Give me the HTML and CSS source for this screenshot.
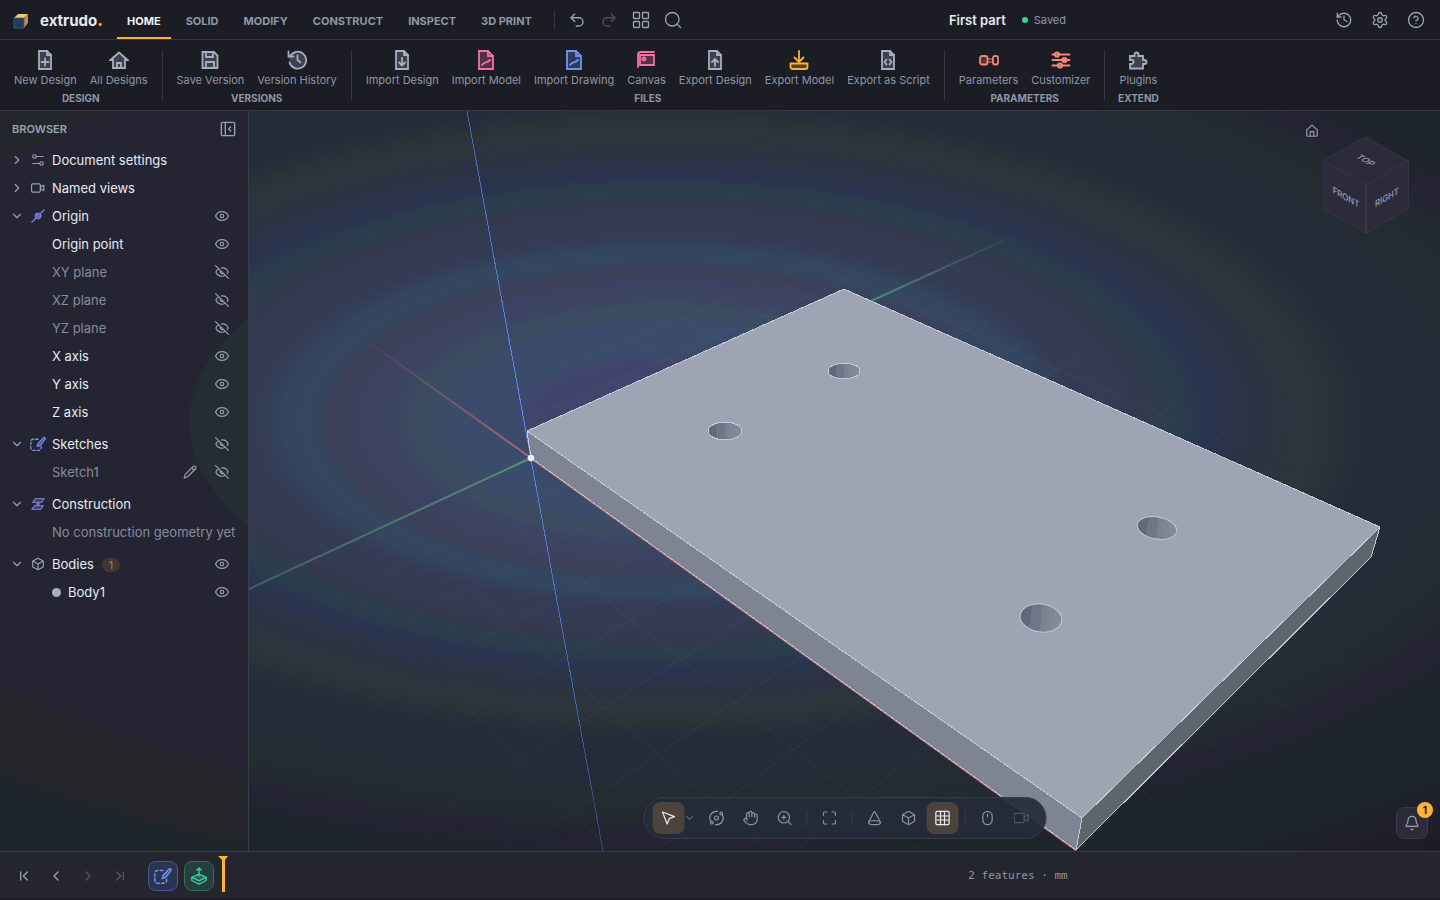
FILE: index.html
```html
<!DOCTYPE html>
<html lang="en">
<head>
<meta charset="utf-8">
<title>extrudo – First part</title>
<link rel="stylesheet" href="styles.css">
</head>
<body>
<svg class="sprite" aria-hidden="true">
  <symbol id="undo" viewBox="0 0 24 24"><path d="M9 14 4 9l5-5"/><path d="M4 9h10.500a5.500 5.500 0 0 1 0 11H11"/></symbol>
  <symbol id="redo" viewBox="0 0 24 24"><path d="m15 14 5-5-5-5"/><path d="M20 9H9.500a5.500 5.500 0 0 0 0 11H13"/></symbol>
  <symbol id="apps" viewBox="0 0 24 24"><rect x="2" y="2" width="8" height="8" rx="1"/><rect x="14" y="2" width="8" height="8" rx="1"/><rect x="14" y="14" width="8" height="8" rx="1"/><rect x="2" y="14" width="8" height="8" rx="1"/></symbol>
  <symbol id="search" viewBox="0 0 24 24"><circle cx="11" cy="11" r="9"/><path d="m22 22-4.500-4.500"/></symbol>
  <symbol id="history" viewBox="0 0 24 24"><path d="M3 12a9 9 0 1 0 9-9 9.750 9.750 0 0 0-6.740 2.740L3 8"/><path d="M3 3v5h5M12 7v5l4 2"/></symbol>
  <symbol id="gear" viewBox="0 0 24 24"><path d="M9.671 4.136a2.340 2.340 0 0 1 4.659 0 2.340 2.340 0 0 0 3.319 1.915 2.340 2.340 0 0 1 2.330 4.033 2.340 2.340 0 0 0 0 3.831 2.340 2.340 0 0 1-2.330 4.033 2.340 2.340 0 0 0-3.319 1.915 2.340 2.340 0 0 1-4.659 0 2.340 2.340 0 0 0-3.320-1.915 2.340 2.340 0 0 1-2.330-4.033 2.340 2.340 0 0 0 0-3.831A2.340 2.340 0 0 1 6.350 6.051a2.340 2.340 0 0 0 3.319-1.915"/><circle cx="12" cy="12" r="3"/></symbol>
  <symbol id="help" viewBox="0 0 24 24"><circle cx="12" cy="12" r="10"/><path d="M9.100 9a3 3 0 0 1 5.800 1c0 2-3 3-3 3M12 17h.01"/></symbol>
  <symbol id="file-plus" viewBox="0 0 20 20"><path class="tone" d="M4 1h8l4 4v14H4z"/><path d="M12 1v4h4M10 8.500v7M6.500 12h7"/></symbol>
  <symbol id="house" viewBox="0 0 20 20"><path class="tone" d="M1.500 10 10 2.500 18.500 10H16v8H4v-8z"/><path d="M8 18v-5h4v5"/></symbol>
  <symbol id="save" viewBox="0 0 20 20"><path class="tone" d="M2.500 2H14l3.500 3.500V18h-15z"/><path d="M6 2v5h7V2M6 18v-6h8v6"/></symbol>
  <symbol id="clock" viewBox="0 0 20 20"><circle class="tone" cx="10.500" cy="10" r="8.500" stroke="none"/><path d="M3 6.500a8.500 8.500 0 1 1-.5 6"/><path d="M1.500 1.500v5h5M10.500 5.500V10l3 2.500"/></symbol>
  <symbol id="file-down" viewBox="0 0 20 20"><path class="tone" d="M4 1h8l4 4v14H4z"/><path d="M12 1v4h4M10 8v7.500M7 12.500l3 3 3-3"/></symbol>
  <symbol id="file-up" viewBox="0 0 20 20"><path class="tone" d="M4 1h8l4 4v14H4z"/><path d="M12 1v4h4M10 16V9M7 12l3-3 3 3"/></symbol>
  <symbol id="file-curve" viewBox="0 0 20 20"><path class="tone" d="M3 1h9l5 5v13H3z"/><path d="M12 1v5h5M6 15c3-4 4-1 8-5"/></symbol>
  <symbol id="canvas" viewBox="0 0 20 20"><path class="tone" d="M4 5h14v10H4z"/><path d="M2 17V4.500A3 3 0 0 1 5 2h13"/><circle cx="8" cy="9" r="1.500"/></symbol>
  <symbol id="tray-down" viewBox="0 0 20 20"><path d="M10 1v10M5.500 7.500 10 12l4.500-4.500"/><path class="tone" d="M1.500 13.500h17V17a2 2 0 0 1-2 2h-13a2 2 0 0 1-2-2z"/></symbol>
  <symbol id="file-code" viewBox="0 0 20 20"><path class="tone" d="M4 1h8l4 4v14H4z"/><path d="M12 1v4h4M8.500 9.500 6.500 12l2 2.500M11.500 9.500l2 2.500-2 2.500"/></symbol>
  <symbol id="params" viewBox="0 0 20 20"><rect class="tone" x="1" y="6" width="7.500" height="8.500" rx="2"/><rect x="14" y="6" width="5" height="8.500" rx="2"/><path d="M8.500 9H14M8.500 12H14" stroke-width="1.200"/></symbol>
  <symbol id="sliders" viewBox="0 0 20 20"><path d="M1.500 4.500h17M1.500 10h17M1.500 15.500h17"/><g class="tone"><circle cx="6" cy="4.500" r="2.200"/><circle cx="13.500" cy="10" r="2.200"/><circle cx="9" cy="15.500" r="2.200"/></g></symbol>
  <symbol id="puzzle" viewBox="0 0 20 20"><path class="tone" d="M2 6h4.500V4.500a2 2 0 0 1 4 0V6H15v4h1.500a2 2 0 0 1 0 4H15v4.500H2V14h1.500a2 2 0 0 0 0-4H2z"/></symbol>
  <symbol id="panel" viewBox="0 0 24 24"><rect x="2" y="2" width="20" height="20" rx="2"/><path d="M8 2v20M16 9l-3 3 3 3"/></symbol>
  <symbol id="right" viewBox="0 0 24 24"><path d="m9 18 6-6-6-6"/></symbol>
  <symbol id="left" viewBox="0 0 24 24"><path d="m15 18-6-6 6-6"/></symbol>
  <symbol id="down" viewBox="0 0 24 24"><path d="m6 9 6 6 6-6"/></symbol>
  <symbol id="first" viewBox="0 0 24 24"><path d="m17 18-6-6 6-6M7 6v12"/></symbol>
  <symbol id="last" viewBox="0 0 24 24"><path d="m7 18 6-6-6-6M17 6v12"/></symbol>
  <symbol id="settings2" viewBox="0 0 24 24"><path d="M21 6H9M15 18H3"/><circle cx="18" cy="18" r="3"/><circle cx="6" cy="6" r="3"/></symbol>
  <symbol id="video" viewBox="0 0 24 24"><path d="m16 13 5.223 3.482a.5.5 0 0 0 .777-.416V7.870a.5.5 0 0 0-.752-.432L16 10.500"/><rect x="1" y="5" width="15" height="14" rx="2"/></symbol>
  <symbol id="origin" viewBox="0 0 16 16"><path d="M1 15 15 1" stroke-width="1.500" stroke-dasharray="2 1"/><circle cx="8" cy="8" r="3.500" fill="#5f62c4" stroke-width="1"/><path d="M6.500 6.500l3 3" stroke-width="1"/></symbol>
  <symbol id="sketch" viewBox="0 0 20 20"><path d="M10 4H4a3 3 0 0 0-3 3v8a3 3 0 0 0 3 3h7a3 3 0 0 0 3-3v-2" stroke-dasharray="3 2.500" stroke-width="1.700"/><path d="m9 13 1-3.500L17 2a1.500 1.500 0 0 1 2 2l-6.500 8z" fill="currentColor" fill-opacity=".4" stroke-width="1.500"/></symbol>
  <symbol id="planes" viewBox="0 0 16 16"><path d="M5 2h10l-3 4H2zM4 10h10l-3 4H1z" fill="currentColor" fill-opacity=".2" stroke-width="1.300"/><path d="M8 6v4M6 8h4" stroke-width="1.200"/></symbol>
  <symbol id="cube" viewBox="0 0 24 24"><path d="M12 2 21 7v10l-9 5-9-5V7zM3.300 7 12 12l8.700-5M12 22V12"/></symbol>
  <symbol id="eye" viewBox="0 0 24 24"><path d="M1 12C3 7 7 4.500 12 4.500s9 2.500 11 7.500c-2 5-6 7.500-11 7.500S3 17 1 12z"/><circle cx="12" cy="12" r="3"/></symbol>
  <symbol id="eye-off" viewBox="0 0 24 24"><path d="M10.700 5.100A10.700 10.700 0 0 1 22.500 12a10.700 10.700 0 0 1-1.500 2.500M14 14.200a3 3 0 0 1-4.200-4.200M17.500 17.500A10.700 10.700 0 0 1 1.500 12a10.700 10.700 0 0 1 5-5.100M1 1l22 22"/></symbol>
  <symbol id="pencil" viewBox="0 0 24 24"><path d="M21.200 6.800a2.800 2.800 0 0 0-4-4L3.800 16.200 2 22l5.800-1.800zM15 5l4 4"/></symbol>
  <symbol id="cursor" viewBox="0 0 24 24"><path d="M3 3l7 18 3-8 8-3z"/></symbol>
  <symbol id="orbit" viewBox="0 0 24 24"><circle cx="12" cy="12" r="3"/><circle cx="19" cy="5" r="2"/><circle cx="5" cy="19" r="2"/><path d="M10.400 21.900a10 10 0 0 0 9.940-15.416M13.500 2.100a10 10 0 0 0-9.841 15.416"/></symbol>
  <symbol id="hand" viewBox="0 0 24 24"><path d="M18 11V6a2 2 0 0 0-4 0M14 10V4a2 2 0 0 0-4 0v2M10 10.500V6a2 2 0 0 0-4 0v8"/><path d="M18 8a2 2 0 1 1 4 0v6a8 8 0 0 1-8 8h-2c-2.800 0-4.500-.86-5.990-2.340l-3.600-3.600a2 2 0 0 1 2.830-2.820L7 15"/></symbol>
  <symbol id="zoom" viewBox="0 0 24 24"><circle cx="11" cy="11" r="8.500"/><path d="m22 22-5-5M11 8v6M8 11h6"/></symbol>
  <symbol id="fit" viewBox="0 0 24 24"><path d="M8 3H5a2 2 0 0 0-2 2v3M21 8V5a2 2 0 0 0-2-2h-3M3 16v3a2 2 0 0 0 2 2h3M16 21h3a2 2 0 0 0 2-2v-3"/></symbol>
  <symbol id="cone" viewBox="0 0 24 24"><path d="m20.900 18.500-8-15.500c-.3-1-1.500-1-1.800 0L3 18.500"/><ellipse cx="12" cy="19" rx="9" ry="3"/></symbol>
  <symbol id="grid" viewBox="0 0 24 24"><rect x="2" y="2" width="20" height="20" rx="2"/><path d="M2 9h20M2 15h20M9 2v20M15 2v20"/></symbol>
  <symbol id="mouse" viewBox="0 0 24 24"><rect x="5" y="2" width="14" height="20" rx="7"/><path d="M12 6v4"/></symbol>
  <symbol id="home" viewBox="0 0 24 24"><path d="M15 21v-8H9v8M3 10l9-8 9 8v9a2 2 0 0 1-2 2H5a2 2 0 0 1-2-2z"/></symbol>
  <symbol id="bell" viewBox="0 0 24 24"><path d="M10.300 21a2 2 0 0 0 3.400 0M3.300 15.300A1 1 0 0 0 4 17h16a1 1 0 0 0 .7-1.700C19.400 14 18 12.500 18 8A6 6 0 0 0 6 8c0 4.500-1.400 6-2.700 7.300z"/></symbol>
  <symbol id="extrude" viewBox="0 0 20 20"><path d="m2 11.500 8-3.500 8 3.500-8 4z" fill="currentColor" fill-opacity=".25"/><path d="M2 11.500V15l8 4 8-4v-3.500M10 10V1M7.500 3.500 10 1l2.500 2.500"/></symbol>
</svg>

<header class="topbar">
  <div class="brand">
    <svg class="logo" viewBox="0 0 16 16"><path fill="#ffc670" d="M1 5 5 1h10l-4 4z"/><path fill="#c98c35" d="m11 5 4-4v9l-4 5z"/><path fill="#243a5c" stroke="#35608f" stroke-width="1" stroke-dasharray="1 1" d="M1 5h10v10H1z"/></svg>
    <span>extrudo<b>.</b></span>
  </div>
  <nav class="tabs">
    <button class="tab active">HOME</button><button class="tab">SOLID</button><button class="tab">MODIFY</button><button class="tab">CONSTRUCT</button><button class="tab">INSPECT</button><button class="tab">3D PRINT</button>
  </nav>
  <div class="quick">
    <button aria-label="Undo"><svg><use href="#undo"/></svg></button>
    <button aria-label="Redo" disabled><svg><use href="#redo"/></svg></button>
    <button aria-label="Commands"><svg><use href="#apps"/></svg></button>
    <button aria-label="Search"><svg><use href="#search"/></svg></button>
  </div>
  <div class="doc"><h1>First part</h1><span class="saved">Saved</span></div>
  <div class="account">
    <button aria-label="History"><svg><use href="#history"/></svg></button>
    <button aria-label="Settings"><svg><use href="#gear"/></svg></button>
    <button aria-label="Help"><svg><use href="#help"/></svg></button>
  </div>
</header>

<div class="ribbon">
  <section class="group"><div class="tools">
    <button><svg><use href="#file-plus"/></svg>New Design</button>
    <button><svg><use href="#house"/></svg>All Designs</button></div><h2>DESIGN</h2></section>
  <section class="group"><div class="tools">
    <button><svg><use href="#save"/></svg>Save Version</button>
    <button><svg><use href="#clock"/></svg>Version History</button></div><h2>VERSIONS</h2></section>
  <section class="group"><div class="tools">
    <button><svg><use href="#file-down"/></svg>Import Design</button>
    <button><svg class="pink"><use href="#file-curve"/></svg>Import Model</button>
    <button><svg class="blue"><use href="#file-curve"/></svg>Import Drawing</button>
    <button><svg class="pink"><use href="#canvas"/></svg>Canvas</button>
    <button><svg><use href="#file-up"/></svg>Export Design</button>
    <button><svg class="amber"><use href="#tray-down"/></svg>Export Model</button>
    <button><svg><use href="#file-code"/></svg>Export as Script</button></div><h2>FILES</h2></section>
  <section class="group"><div class="tools">
    <button><svg class="coral"><use href="#params"/></svg>Parameters</button>
    <button><svg class="coral"><use href="#sliders"/></svg>Customizer</button></div><h2>PARAMETERS</h2></section>
  <section class="group"><div class="tools">
    <button><svg><use href="#puzzle"/></svg>Plugins</button></div><h2>EXTEND</h2></section>
</div>

<div class="workspace">
  <aside class="browser">
    <div class="browser-head"><h2>BROWSER</h2><button aria-label="Collapse browser"><svg><use href="#panel"/></svg></button></div>
    <ul class="tree">
      <li class="row"><svg><use href="#right"/></svg><svg class="kind"><use href="#settings2"/></svg><span>Document settings</span></li>
      <li class="row"><svg><use href="#right"/></svg><svg class="kind"><use href="#video"/></svg><span>Named views</span></li>
      <li class="row"><svg><use href="#down"/></svg><svg class="kind violet"><use href="#origin"/></svg><span>Origin</span><button aria-label="Hide Origin"><svg><use href="#eye"/></svg></button></li>
      <li class="row child"><span>Origin point</span><button aria-label="Hide Origin point"><svg><use href="#eye"/></svg></button></li>
      <li class="row child off"><span>XY plane</span><button aria-label="Show XY plane"><svg><use href="#eye-off"/></svg></button></li>
      <li class="row child off"><span>XZ plane</span><button aria-label="Show XZ plane"><svg><use href="#eye-off"/></svg></button></li>
      <li class="row child off"><span>YZ plane</span><button aria-label="Show YZ plane"><svg><use href="#eye-off"/></svg></button></li>
      <li class="row child"><span>X axis</span><button aria-label="Hide X axis"><svg><use href="#eye"/></svg></button></li>
      <li class="row child"><span>Y axis</span><button aria-label="Hide Y axis"><svg><use href="#eye"/></svg></button></li>
      <li class="row child"><span>Z axis</span><button aria-label="Hide Z axis"><svg><use href="#eye"/></svg></button></li>
      <li class="row section"><svg><use href="#down"/></svg><svg class="kind blue"><use href="#sketch"/></svg><span>Sketches</span><button aria-label="Show sketches"><svg><use href="#eye-off"/></svg></button></li>
      <li class="row child off"><span>Sketch1</span><button aria-label="Edit Sketch1"><svg><use href="#pencil"/></svg></button><button aria-label="Show Sketch1"><svg><use href="#eye-off"/></svg></button></li>
      <li class="row section"><svg><use href="#down"/></svg><svg class="kind violet"><use href="#planes"/></svg><span>Construction</span></li>
      <li class="row child off"><span>No construction geometry yet</span></li>
      <li class="row section"><svg><use href="#down"/></svg><svg class="kind"><use href="#cube"/></svg><span>Bodies<em class="count">1</em></span><button aria-label="Hide bodies"><svg><use href="#eye"/></svg></button></li>
      <li class="row child"><span class="body">Body1</span><button aria-label="Hide Body1"><svg><use href="#eye"/></svg></button></li>
    </ul>
  </aside>

  <main class="viewport">
    <svg class="scene" viewBox="249 111 1191 740" preserveAspectRatio="xMidYMid slice">
      <defs>
        <radialGradient id="fade" gradientUnits="userSpaceOnUse" cx="860" cy="600" r="560"><stop offset=".5" stop-color="#fff"/><stop offset="1" stop-color="#000"/></radialGradient>
        <mask id="grid-mask" maskUnits="userSpaceOnUse" x="249" y="111" width="1191" height="740"><path fill="url(#fade)" d="M249 111h1191v740H249z"/></mask>
        <linearGradient id="ax" gradientUnits="userSpaceOnUse" x1="360" y1="336" x2="531" y2="458"><stop stop-color="#a4636d" stop-opacity="0"/><stop offset="1" stop-color="#b0646c"/></linearGradient>
        <linearGradient id="ay" gradientUnits="userSpaceOnUse" x1="860" y1="306" x2="1022" y2="232"><stop stop-color="#4d8f76"/><stop offset="1" stop-color="#4d8f76" stop-opacity="0"/></linearGradient>
        <linearGradient id="ay2" gradientUnits="userSpaceOnUse" x1="249" y1="589" x2="531" y2="458"><stop stop-color="#3d5f5e"/><stop offset="1" stop-color="#579478"/></linearGradient>
        <linearGradient id="az" gradientUnits="userSpaceOnUse" x1="467" y1="111" x2="603" y2="851"><stop stop-color="#4466b0"/><stop offset=".4" stop-color="#5b8cf5"/><stop offset=".7" stop-color="#4a70c6"/><stop offset="1" stop-color="#33477a"/></linearGradient>
        <linearGradient id="bore"><stop stop-color="#626a7a"/><stop offset=".25" stop-color="#626a7a"/><stop offset=".25" stop-color="#6e7687"/><stop offset=".5" stop-color="#6e7687"/><stop offset=".5" stop-color="#79808f"/><stop offset="1" stop-color="#858c9d"/></linearGradient>
      </defs>
      <g mask="url(#grid-mask)"><path id="ground" class="ground"/></g>
      <path d="M360 336 531 458" stroke="url(#ax)" stroke-width="2"/>
      <path d="M860 306 1022 232" stroke="url(#ay)" stroke-width="2"/>
      <path d="M249 589 531 458" stroke="url(#ay2)" stroke-width="2"/>
      <path class="crisp" d="M467 111 603 851" stroke="url(#az)"/>
      <g class="crisp" stroke="#c3cad8" stroke-linejoin="round">
        <path fill="#9ea4b4" d="m844 289 536 238-298 291-555-387z"/>
        <path fill="#7e8494" d="m527 431 555 387-6 32-545-392z"/>
        <path fill="#5d666d" d="m1380 527-9 30-295 293 6-32z"/>
        <g fill="url(#bore)"><ellipse cx="844" cy="371" rx="16" ry="8"/><ellipse cx="725" cy="431" rx="17" ry="9"/><ellipse cx="1157" cy="528" rx="20" ry="11" transform="rotate(10 1157 528)"/><ellipse cx="1041" cy="618" rx="21" ry="14" transform="rotate(8 1041 618)"/></g>
      </g>
      <path d="m531 459 545 392" stroke="#c0656c"/>
      <circle cx="531" cy="458" r="3" fill="#eef2f5"/>
    </svg>

    <div class="navcube">
      <button aria-label="Home view"><svg><use href="#home"/></svg></button>
      <svg class="cube" viewBox="0 0 86 98"><g fill="#2d2b3b" stroke="#2f3946" stroke-linejoin="round"><path d="m43 1 42 24-42 24L1 25z"/><path d="m1 25 42 24v48L1 73z"/><path d="m85 25-42 24v48l42-24z"/></g><path d="M43 49v48" stroke="#3d4850"/>
      <g class="faces"><text transform="matrix(.866 .5 -.866 .5 43 24)">TOP</text><text transform="matrix(.866 .5 0 1 23 61)">FRONT</text><text transform="matrix(.866 -.5 0 1 64 61)">RIGHT</text></g></svg>
    </div>

    <div class="viewbar">
      <button class="active" aria-label="Select"><svg><use href="#cursor"/></svg></button>
      <button class="more" aria-label="Selection options"><svg><use href="#down"/></svg></button>
      <button aria-label="Orbit"><svg><use href="#orbit"/></svg></button>
      <button aria-label="Pan"><svg><use href="#hand"/></svg></button>
      <button aria-label="Zoom"><svg><use href="#zoom"/></svg></button>
      <i></i>
      <button aria-label="Fit"><svg><use href="#fit"/></svg></button>
      <i></i>
      <button aria-label="Perspective"><svg><use href="#cone"/></svg></button>
      <button aria-label="Display style"><svg><use href="#cube"/></svg></button>
      <button class="active" aria-label="Grid"><svg><use href="#grid"/></svg></button>
      <i></i>
      <button aria-label="Mouse"><svg><use href="#mouse"/></svg></button>
      <button aria-label="Record" disabled><svg><use href="#video"/></svg></button>
    </div>
    <button class="alerts" aria-label="Notifications"><svg><use href="#bell"/></svg><span>1</span></button>
  </main>
</div>

<footer class="timeline">
  <div class="steps">
    <button aria-label="First"><svg><use href="#first"/></svg></button>
    <button aria-label="Previous"><svg><use href="#left"/></svg></button>
    <button aria-label="Next" disabled><svg><use href="#right"/></svg></button>
    <button aria-label="Last" disabled><svg><use href="#last"/></svg></button>
  </div>
  <div class="features">
    <button class="feature blue" aria-label="Sketch1"><svg><use href="#sketch"/></svg></button>
    <button class="feature green" aria-label="Extrude1"><svg><use href="#extrude"/></svg></button>
    <svg class="marker" viewBox="0 0 10 36"><path fill="#ffb238" d="M0 0h10L7 4v32H4V4z"/></svg>
  </div>
  <p>2 features · mm</p>
</footer>
<script src="ground.js"></script>
</body>
</html>
```
FILE: ground.js
```js
// Projects the ground grid through the perspective of the part's base.
const [a, d, b, c] = [[531, 458], [1076, 850], [1371, 557], [844, 314]];
const e1 = [d[0] - b[0], d[1] - b[1]];
const e2 = [c[0] - b[0], c[1] - b[1]];
const s = [a[0] - d[0] + b[0] - c[0], a[1] - d[1] + b[1] - c[1]];
const det = e1[0] * e2[1] - e1[1] * e2[0];
const g = (s[0] * e2[1] - s[1] * e2[0]) / det;
const h = (e1[0] * s[1] - e1[1] * s[0]) / det;
const at = (u, v) => {
  const w = g * u + h * v + 1;
  return [0, 1].map(i => Math.round(((d[i] - a[i] + g * d[i]) * u + (c[i] - a[i] + h * c[i]) * v + a[i]) / w)).join(' ');
};
let path = '';
for (let i = -2; i <= 14; i++) path += `M${at(i / 10, -0.8)}L${at(i / 10, 1.25)}`;
for (let j = -5; j <= 7; j++) path += `M${at(-0.2, j / 6)}L${at(1.4, j / 6)}`;
document.getElementById('ground').setAttribute('d', path);
```
FILE: styles.css
```css
* { box-sizing: border-box; }
body {
  margin: 0; min-height: 100vh; display: flex; flex-direction: column; overflow: hidden;
  background: #1c1c24; color: #e6eaf2; font: 13px/20px Inter, "Liberation Sans", sans-serif;
}
h1, h2, p, ul { margin: 0; padding: 0; }
button {
  display: flex; align-items: center; justify-content: center; padding: 0; border: 0;
  background: none; color: #98a1b2; font: inherit;
}
svg { flex: none; fill: none; stroke: currentColor; stroke-width: 2; stroke-linecap: round; stroke-linejoin: round; }
.sprite { position: absolute; width: 0; height: 0; }
.pink { color: #f472a8; }
.blue { color: #6f93f5; }
.amber { color: #ffb238; }
.coral { color: #f58774; }
.violet { color: #8a86f0; }
.green { color: #3ecf9a; }

.topbar { display: flex; height: 40px; border-bottom: 1px solid #353746; }
.brand { display: flex; align-items: center; gap: 11px; width: 117px; padding: 2px 0 0 13px; font-size: 15px; font-weight: 700; }
.brand b { color: #ffb238; }
.logo { width: 16px; height: 16px; stroke: none; }
.tabs { display: flex; gap: 5px; }
.tab { padding: 4px 10px 0; border-bottom: 2px solid transparent; color: #8e96a7; font-size: 11px; font-weight: 700; }
.tab.active { color: #f0f2f7; border-color: #ffb238; }
.quick { display: flex; align-items: center; align-self: center; height: 20px; margin-left: 12px; padding-left: 6px; border-left: 1px solid #353746; }
.quick button { width: 32px; }
.quick svg, .account svg { width: 18px; height: 18px; stroke-width: 1.800; }
button:disabled { opacity: .4; }
.doc { flex: 1; display: flex; align-items: center; justify-content: center; gap: 16px; }
.doc h1 { font-size: 13px; line-height: 20px; font-weight: 600; }
.saved { display: flex; align-items: center; gap: 6px; color: #8e96a7; font-size: 11px; }
.saved::before { content: ""; width: 6px; height: 6px; border-radius: 50%; background: #3ecf9a; }
.account { display: flex; padding-right: 6px; }
.account button { width: 36px; }

.ribbon { display: flex; height: 71px; padding-top: 10px; border-bottom: 1px solid #353746; }
.group { height: 50px; padding: 0 8px; border-right: 1px solid #353746; }
.group:last-child { border: 0; }
.tools { display: flex; justify-content: center; gap: 1px; }
.tools button { flex-direction: column; gap: 2px; padding: 0 6px; color: #8e96a7; font-size: 11px; line-height: 16px; white-space: nowrap; }
.tools svg { width: 20px; height: 20px; color: #a5afc1; stroke-width: 1.800; stroke-linejoin: miter; }
.tools svg.pink { color: #f472a8; }
.tools svg.blue { color: #6f93f5; }
.tools svg.amber { color: #ffb238; }
.tools svg.coral { color: #f58774; }
.tone { fill: currentColor; fill-opacity: .25; }
.group h2 { margin-top: 2px; color: #8e96a7; font-size: 10px; line-height: 16px; font-weight: 700; text-align: center; }

.workspace { flex: 1; display: flex; min-height: 0; }
.browser {
  width: 249px; flex: none; border-right: 1px solid #353d4e;
  background: radial-gradient(ellipse 1320px 600px at 660px 42%, #242d32 35.600%, #252433 35.700%, #252433 66%, #25262b 66.300%, #25262b 76%, #1e252a 78%);
}
.browser-head { display: flex; align-items: center; justify-content: space-between; height: 35px; padding: 0 12px; }
.browser-head h2 { color: #98a1b2; font-size: 11px; font-weight: 600; }
.browser-head svg { width: 16px; height: 16px; }
.tree { list-style: none; }
.row { display: flex; align-items: center; height: 28px; padding: 0 19px 0 10px; gap: 7px; }
.row span { flex: 1; white-space: nowrap; }
.row svg { width: 14px; height: 14px; color: #98a1b2; }
.row .kind.violet { color: #8a86f0; }
.row .kind.blue { width: 16px; height: 16px; margin: 0 -1px; color: #6f93f5; }
.row button + button { margin-left: 11px; }
.row.child { padding-left: 52px; }
.off { color: #858c9c; }
.section { margin-top: 4px; }
.count { display: inline-block; margin-left: 8px; padding: 0 7px; border-radius: 7px; background: #43382f; color: #8e8a88; font-size: 11px; line-height: 14px; font-style: normal; }
.body::before { content: ""; display: inline-block; width: 9px; height: 9px; margin-right: 7px; border-radius: 50%; background: #a5afc1; }

.viewport {
  position: relative; flex: 1; overflow: hidden;
  background: radial-gradient(ellipse 1320px 600px at 35% 42%,
    #3f4d72, #414670 6%, #42436a 9%, #3b4b6c 12%, #3b4b6b 16%, #3b4c62 18%, #3b4c61 19%,
    #3c4363 21%, #3d4262 23%, #3d4058 25%, #344660 27%, #33455f 29%, #353b55 31%, #343b55 34%,
    #35394f 36%, #2c3e4d 38%, #2b3d4c 39%, #2a3450 41%, #2b3348 43%, #2c3242 45%, #2d343c 48%,
    #2c3338 50%, #252b3b 53%, #252b3a 58%, #242c32 62%, #232b30 66%, #252234 69%, #1e252b 73%,
    #1d242a 83%, #211e2b 88%, #1b1b23 94%);
}
.scene { display: block; width: 100%; height: 100%; stroke-width: 1; stroke-linecap: butt; }
.crisp { shape-rendering: crispEdges; }
.ground { stroke: #7d9a9a; stroke-opacity: .11; }
.navcube { position: absolute; top: 13px; right: 31px; display: flex; align-items: flex-start; gap: 4px; }
.navcube button svg { width: 14px; height: 14px; }
.navcube .cube { width: 86px; height: 98px; margin-top: 12px; stroke-width: 1; }
.faces { fill: #98a1b2; stroke: none; font-size: 9px; font-weight: 500; text-anchor: middle; dominant-baseline: central; }
.viewbar {
  position: absolute; left: 50%; bottom: 12px; transform: translateX(-50%);
  display: flex; align-items: center; gap: 2px; padding: 4px 8px;
  border: 1px solid #343b4c; border-radius: 21px; background: rgb(37 43 58 / 92%);
}
.viewbar button { width: 32px; height: 32px; border-radius: 8px; color: #8993a6; }
.viewbar svg { width: 16px; height: 16px; stroke-width: 1.800; }
.viewbar .more { width: 12px; margin: 0 3px 0 -3px; }
.viewbar .more svg { width: 12px; height: 12px; }
.viewbar .active { background: #4c433e; color: #e6eaf2; }
.viewbar i { width: 1px; height: 16px; margin: 0 4px; background: #353b4a; }
.alerts { position: absolute; right: 12px; bottom: 12px; width: 32px; height: 32px; border: 1px solid #363c4b; border-radius: 8px; background: #2c2b3a; }
.alerts svg { width: 16px; height: 16px; stroke-width: 1.800; }
.alerts span { position: absolute; top: -6px; right: -6px; width: 16px; border-radius: 8px; background: #ffb238; color: #1c1c24; font-size: 10px; line-height: 16px; font-weight: 700; }

.timeline { display: grid; grid-template-columns: auto 1fr auto 26%; align-items: center; height: 49px; padding: 2px 0 0 8px; border-top: 1px solid #353d4e; border-bottom: 2px solid #1c1c24; background: #25252d; }
.steps { display: flex; width: 140px; }
.steps button { width: 32px; }
.steps svg { width: 16px; height: 16px; }
.features { display: flex; align-items: center; gap: 6px; }
.feature { width: 30px; height: 30px; border: 1px solid #465a96; border-radius: 8px; background: #2b3450; }
.feature.blue { color: #6f93f5; }
.feature.green { color: #3ecf9a; border-color: #2f6f5e; background: #253e3e; }
.feature svg { width: 18px; height: 18px; stroke-width: 1.500; }
.features .marker { width: 10px; height: 36px; margin: -4px 0 0 -2px; stroke: none; }
.timeline p { color: #8e96a7; font: 11px/16px "DejaVu Sans Mono", monospace; }
```
